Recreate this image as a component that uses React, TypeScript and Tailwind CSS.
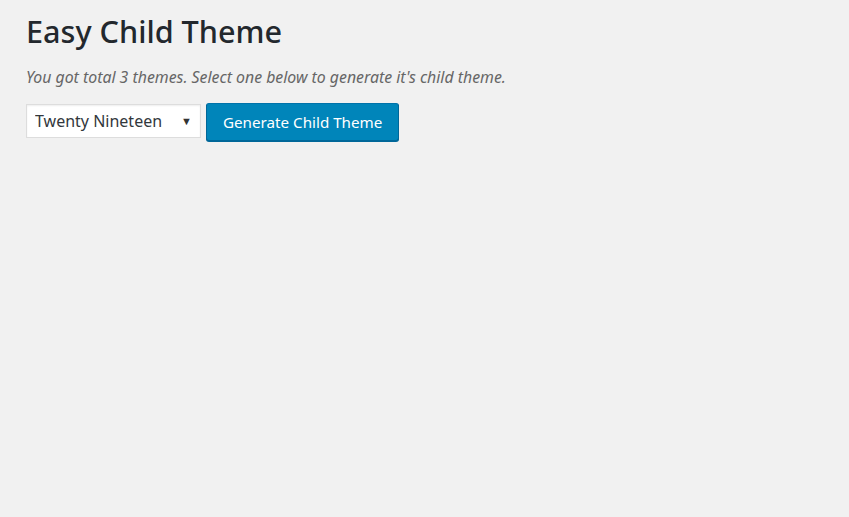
import React from "react";

export default function App() {
  return (
    <div
      className="w-[849px] h-[517px] bg-[#f1f1f1] pl-[26px] pt-[9px]"
      style={{ fontFamily: '"Noto Sans", "Open Sans", sans-serif' }}
    >
      <h1 className="text-[30.6px] leading-[44px] text-[#23282d] font-medium">Easy Child Theme</h1>
      <p className="mt-[14px] text-[15.85px] leading-[20px] italic text-[#666]">
        You got total 3 themes. Select one below to generate it's child theme.
      </p>
      <div className="mt-[16px] flex items-start gap-[5px]">
        <div className="relative mt-[1px]">
          <select className="appearance-none w-[175px] h-[34px] bg-white border border-[#ddd] pl-[8px] text-[16px] text-[#32373c] outline-none shadow-[inset_0_1px_2px_rgba(0,0,0,0.07)]">
            <option>Twenty Nineteen</option>
          </select>
          <span className="pointer-events-none absolute right-[9px] top-[9px] text-[11px] text-[#333]">▼</span>
        </div>
        <button className="h-[38px] px-[16px] rounded-[3px] bg-[#0085ba] border border-t-[#0073aa] border-x-[#006799] border-b-[#006799] shadow-[0_1px_0_#006799] text-white text-[15.2px] leading-[36px]">
          Generate Child Theme
        </button>
      </div>
    </div>
  );
}
